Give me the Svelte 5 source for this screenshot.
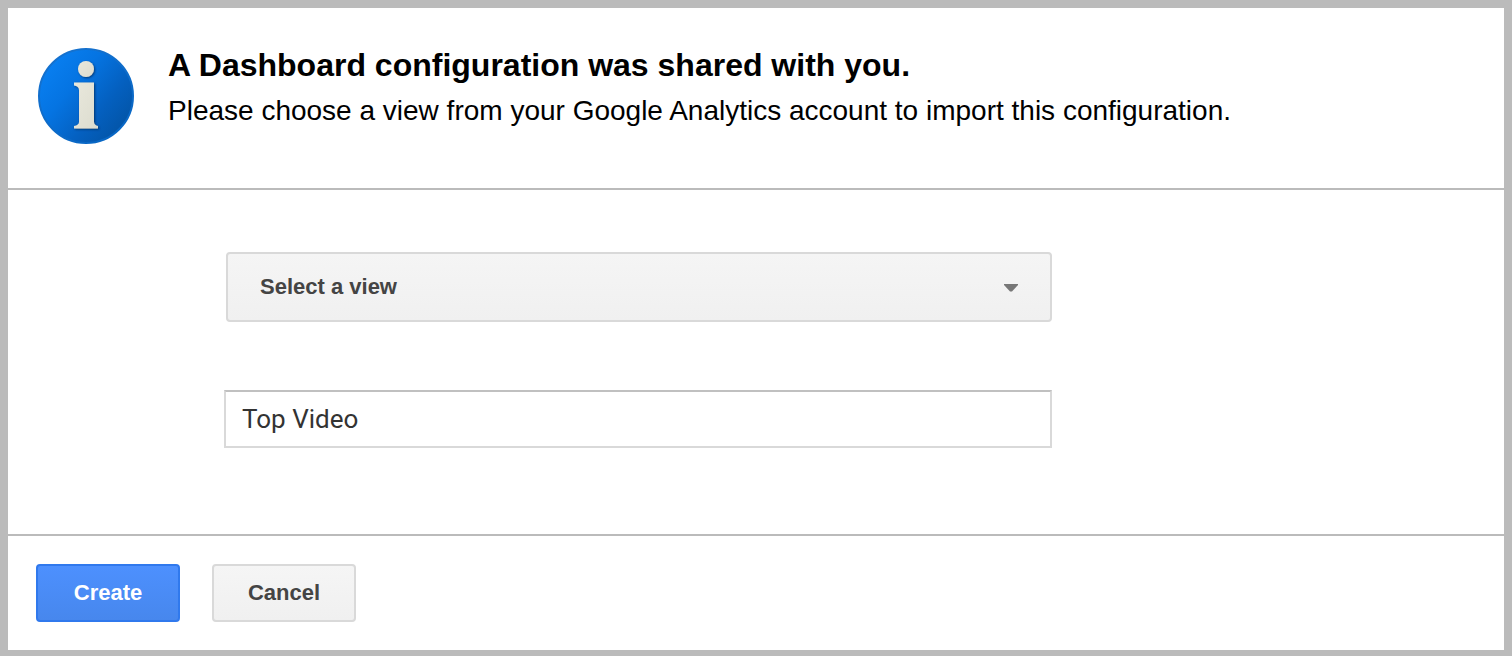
<script>
  let view = $state('');
  let name = $state('Top Video');
</script>

<form class="dialog" onsubmit={(e) => e.preventDefault()}>
  <header>
    <svg class="info" viewBox="0 0 96 96" aria-hidden="true">
      <defs>
        <linearGradient id="disc" x1="0.1" y1="0.1" x2="0.95" y2="0.8">
          <stop offset="0" stop-color="#0980f2" />
          <stop offset="0.35" stop-color="#0574e2" />
          <stop offset="0.7" stop-color="#0460c0" />
          <stop offset="1" stop-color="#0354a6" />
        </linearGradient>
        <linearGradient id="rim" x1="0.2" y1="0" x2="0.8" y2="1">
          <stop offset="0" stop-color="#1672cf" />
          <stop offset="1" stop-color="#0766c4" />
        </linearGradient>
        <linearGradient id="glyph" x1="0" y1="0" x2="1" y2="1">
          <stop offset="0" stop-color="#e9e8dc" />
          <stop offset="1" stop-color="#dcdccf" />
        </linearGradient>
        <filter id="shade" x="-30%" y="-20%" width="160%" height="140%">
          <feDropShadow dx="1" dy="1" stdDeviation="1" flood-color="#012c5c" flood-opacity="0.8" />
        </filter>
      </defs>
      <circle cx="48" cy="48" r="47" fill="url(#disc)" stroke="url(#rim)" stroke-width="2" />
      <g fill="url(#glyph)" filter="url(#shade)">
        <circle cx="48" cy="21" r="8" />
        <path d="M36 34.5H56V74Q56 77 60 78V80.5H36V78Q41 77 41 74V42Q41 38 36 37.5Z" />
      </g>
    </svg>
    <div>
      <h1>A Dashboard configuration was shared with you.</h1>
      <p>Please choose a view from your Google Analytics account to import this configuration.</p>
    </div>
  </header>

  <main>
    <div class="fields">
      <div class="picker">
        <select aria-label="Select a view" bind:value={view}>
          <option value="">Select a view</option>
        </select>
        <svg class="arrow" viewBox="0 0 14 8" aria-hidden="true"><path d="M0 0H14V1L8 7.5H6L0 1Z" fill="#777" /></svg>
      </div>
      <input type="text" aria-label="Dashboard name" bind:value={name} />
    </div>
  </main>

  <footer>
    <button class="primary" type="submit">Create</button>
    <button type="button">Cancel</button>
  </footer>
</form>

<style>
  :global(body) {
    background: #bbb;
  }
  .dialog {
    box-sizing: border-box;
    min-height: 100vh;
    display: flex;
    flex-direction: column;
    border: 8px solid #bbb;
    border-bottom-width: 6px;
    background: #fff;
    color: #000;
    font-family: "Liberation Sans", Arial, sans-serif;
  }
  header {
    display: flex;
    align-items: flex-start;
    gap: 34px;
    padding: 40px 30px 44px;
    border-bottom: 2px solid #bbb;
  }
  .info {
    flex: none;
    width: 96px;
    height: 96px;
  }
  h1 {
    margin: 0;
    font-size: 32px;
    line-height: 34px;
  }
  p {
    margin: 10px 0 0;
    font-size: 28px;
    line-height: 38px;
  }
  main {
    flex: 1;
    padding: 62px 32px 86px 216px;
  }
  .fields {
    max-width: 828px;
    display: flex;
    flex-direction: column;
    gap: 68px;
  }
  .picker {
    position: relative;
    margin-left: 2px;
  }
  select,
  input,
  button {
    box-sizing: border-box;
    border: 2px solid #d9d9d9;
    margin: 0;
  }
  select,
  button {
    border-radius: 4px;
    background: linear-gradient(#f5f5f5, #f0f0f0);
    color: #444;
    font: bold 22px "Liberation Sans", Arial, sans-serif;
  }
  select {
    display: block;
    appearance: none;
    width: 100%;
    height: 70px;
    padding: 0 64px 2px 32px;
  }
  .arrow {
    position: absolute;
    top: 32px;
    right: 34px;
    width: 14px;
    height: 8px;
    pointer-events: none;
  }
  input {
    width: 100%;
    height: 58px;
    padding: 0 16px;
    border-top-color: #c0c0c0;
    background: #fff;
    color: #333;
    font: 26px Roboto, sans-serif;
  }
  footer {
    display: flex;
    gap: 32px;
    padding: 28px;
    border-top: 2px solid #bbb;
  }
  button {
    min-width: 144px;
    height: 58px;
    padding: 0 32px;
  }
  .primary {
    border-color: #3079ed;
    background: linear-gradient(#4d90fe, #4787ed);
    color: #fff;
  }
</style>
